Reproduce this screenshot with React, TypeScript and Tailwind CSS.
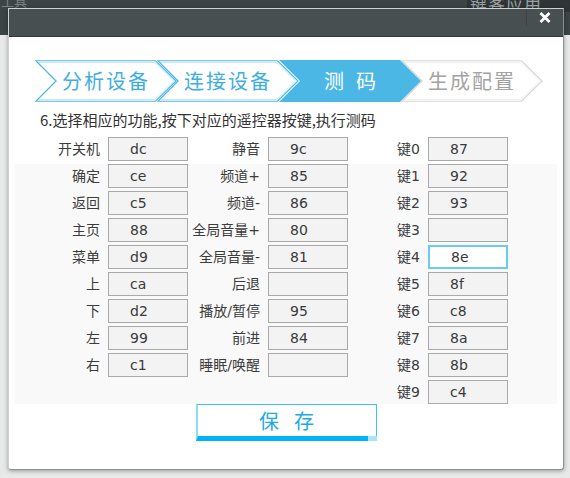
import React from 'react'

const FONT = { fontFamily: '"DejaVu Sans", "Noto Sans CJK SC", sans-serif' }
const CJK = { fontFamily: '"Noto Sans CJK SC", "DejaVu Sans", sans-serif' }

type Entry = [string, string]

const col1: Entry[] = [
  ['开关机', 'dc'],
  ['确定', 'ce'],
  ['返回', 'c5'],
  ['主页', '88'],
  ['菜单', 'd9'],
  ['上', 'ca'],
  ['下', 'd2'],
  ['左', '99'],
  ['右', 'c1'],
]

const col2: Entry[] = [
  ['静音', '9c'],
  ['频道+', '85'],
  ['频道-', '86'],
  ['全局音量+', '80'],
  ['全局音量-', '81'],
  ['后退', ''],
  ['播放/暂停', '95'],
  ['前进', '84'],
  ['睡眠/唤醒', ''],
]

const col3: Entry[] = [
  ['键0', '87'],
  ['键1', '92'],
  ['键2', '93'],
  ['键3', ''],
  ['键4', '8e'],
  ['键5', '8f'],
  ['键6', 'c8'],
  ['键7', '8a'],
  ['键8', '8b'],
  ['键9', 'c4'],
]

const steps = [
  { label: '分析设备', kind: 'done' },
  { label: '连接设备', kind: 'done' },
  { label: '测码', kind: 'active' },
  { label: '生成配置', kind: 'todo' },
]

function Step({ label, kind, first }: { label: string; kind: string; first?: boolean }) {
  const pts = '0.75,0.75 120.5,0.75 141,21 120.5,41.25 0.75,41.25 21,21'
  return (
    <div className={`relative w-[142px] h-[42px] shrink-0 ${first ? '' : '-ml-[20px]'}`}>
      <svg className="absolute inset-0" width="142" height="42" viewBox="0 0 142 42">
        {kind === 'active' ? (
          <polygon points="0,0 121,0 142,21 121,42 0,42 21,21" fill="#4bb7e5" />
        ) : (
          <>
            <polygon
              points="3,2.5 119.8,2.5 138.6,21 119.8,39.5 3,39.5 21.5,21"
              fill="none"
              stroke={kind === 'done' ? '#c4e7f7' : '#f0f0f0'}
              strokeWidth="1"
            />
            <polygon
              points={pts}
              fill="none"
              stroke={kind === 'done' ? '#52b6e3' : '#d6d6d6'}
              strokeWidth="1.2"
            />
          </>
        )}
      </svg>
      <div
        className={`relative h-full flex items-center justify-center pl-[21px] pr-[21px] text-[20px] leading-none ${
          kind === 'active' ? 'text-white gap-[12px]' : kind === 'done' ? 'text-[#3eaee2] tracking-[2px]' : 'text-[#a3a3a3] tracking-[2px]'
        }`}
        style={CJK}
      >
        {kind === 'active' ? (
          <>
            <span>测</span>
            <span>码</span>
          </>
        ) : (
          label
        )}
      </div>
    </div>
  )
}

function Field({ entry, width, focused }: { entry?: Entry; width: string; focused?: boolean }) {
  if (!entry) {
    return (
      <>
        <div className={`${width} shrink-0`} />
        <div className="w-[80px] shrink-0" />
      </>
    )
  }
  return (
    <>
      <div className={`${width} shrink-0 pr-[8px] text-right text-[14px] text-[#3c3c3c] leading-none whitespace-nowrap`}>
        {entry[0]}
      </div>
      <input
        readOnly
        value={entry[1]}
        className={`w-[80px] h-[24px] shrink-0 pl-[21px] text-[14px] text-[#3a3a3a] outline-none ${
          focused ? 'border-2 border-[#6ccbf0] bg-white pl-[20px]' : 'border border-[#a9a9a9] bg-[#f3f3f3]'
        }`}
        style={FONT}
      />
    </>
  )
}

function Row({ i }: { i: number }) {
  return (
    <div className="flex items-center h-[24px]">
      <Field entry={col1[i]} width="w-[88px]" />
      <Field entry={col2[i]} width="w-[80px]" />
      <Field entry={col3[i]} width="w-[80px]" focused={i === 4} />
    </div>
  )
}

export default function App() {
  return (
    <div className="relative w-[570px] h-[478px] overflow-hidden bg-[#e7e8e8]" style={FONT}>
      {/* desktop behind the dialog */}
      <div className="h-[35px] bg-[#3d4446] flex justify-between">
        <div className="-mt-[9px] pl-[1px] text-[13px] text-[#7b8184]" style={CJK}>
          工具
        </div>
        <div className="w-[103px] h-[12px] bg-[#2f3537] overflow-hidden">
          <div className="-mt-[10px] pl-[3px] text-[17px] text-[#9aa0a3] tracking-[1px]" style={CJK}>
            键客应用
          </div>
        </div>
      </div>

      {/* dialog */}
      <div className="absolute left-[8px] top-[8px] w-[556px] bg-white border border-t-[#cdd1d2] border-l-[#cdd1d2] border-r-[#8d9192] border-b-[#8d9192] rounded-b-[3px] shadow-[0_1px_4px_rgba(0,0,0,0.35)]">
        <div className="h-[28px] bg-[#474f51] border-b border-[#343a3c] flex justify-end">
          <div className="w-[37px] h-[17px] border-l border-[#3b4244] flex items-center justify-center">
            <svg width="12" height="11" viewBox="0 0 12 11">
              <path d="M1.5 1 L10.5 10 M10.5 1 L1.5 10" stroke="#ffffff" strokeWidth="2.8" />
            </svg>
          </div>
        </div>

        <div className="px-[6px] pt-[23px] pb-[28px]">
          <div className="flex ml-[20px]">
            {steps.map((s, i) => (
              <Step key={s.label} label={s.label} kind={s.kind} first={i === 0} />
            ))}
          </div>

          <div className="mt-[9px] ml-[25px] h-[18px] text-[15px] leading-[18px] text-[#333]" style={CJK}>
            6.选择相应的功能,按下对应的遥控器按键,执行测码
          </div>

          <div className="mt-[8px] px-[5px]">
            <Row i={0} />
          </div>

          <div className="mt-[3px] px-[5px] bg-[#f9f9f9] flex flex-col gap-[3px]">
            {[1, 2, 3, 4, 5, 6, 7, 8, 9].map((i) => (
              <Row key={i} i={i} />
            ))}
          </div>

          <div className="flex justify-center">
            <div className="relative w-[181px] h-[37px] bg-white border border-[#3ec2f6] border-l-2 border-l-[#8fdcfa] border-b-[5px] border-b-[#00b3f6] flex items-center justify-center gap-[15px] text-[20px] text-[#1ea9e8]" style={CJK}>
              <span>保</span>
              <span>存</span>
              <span className="absolute -right-px -bottom-[5px] w-[9px] h-[5px] bg-[#a9e4fb]" />
            </div>
          </div>
        </div>
      </div>
    </div>
  )
}
